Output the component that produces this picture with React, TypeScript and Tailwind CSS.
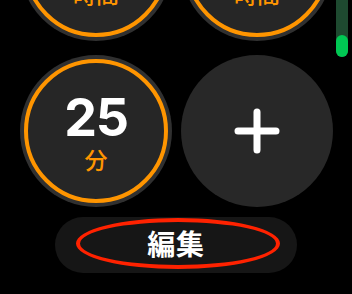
const timers = [
  { value: "1", unit: "時間" },
  { value: "2", unit: "時間" },
  { value: "25", unit: "分" },
];

function TimerCircle({ value, unit }: { value: string; unit: string }) {
  return (
    <div className="w-[152px] h-[152px] rounded-full bg-[#303030] p-[4px]">
      <div className="w-full h-full rounded-full border-[4px] border-[#ff9500] bg-[#262626] flex flex-col items-center justify-center">
        <div className="text-white font-bold text-[52px] leading-none tracking-tight mt-[2px]">{value}</div>
        <div className="text-[#ff9500] font-medium text-[23px] leading-none mt-[6px]">{unit}</div>
      </div>
    </div>
  );
}

export default function App() {
  return (
    <div
      className="relative w-[352px] h-[294px] bg-black overflow-hidden"
      style={{ fontFamily: 'Inter, "Noto Sans CJK JP", sans-serif' }}
    >
      <div className="-mt-[111px] flex flex-col items-center">
        <div className="grid grid-cols-2 gap-x-[9px] gap-y-[14px] ml-[1px]">
          {timers.map((t, i) => (
            <TimerCircle key={i} value={t.value} unit={t.unit} />
          ))}
          <div className="w-[152px] h-[152px] rounded-full bg-[#282828] flex items-center justify-center">
            <svg width="46" height="46" viewBox="0 0 46 46">
              <path d="M23 4 V42 M4 23 H42" stroke="white" strokeWidth="7" strokeLinecap="round" />
            </svg>
          </div>
        </div>
        <div className="relative mt-[10px] w-[242px] h-[56px] rounded-full bg-[#161616] flex items-center justify-center">
          <span className="text-white font-bold text-[28px] leading-none tracking-wide">編集</span>
          <div className="absolute left-[21px] top-[1px] w-[204px] h-[51px] rounded-[50%] border-[4px] border-[#ff2200]" />
        </div>
      </div>
      <div className="absolute right-[4px] top-0 w-[12px] h-[57px] rounded-b-full bg-[#1e4a30]">
        <div className="absolute bottom-0 left-0 w-[12px] h-[22px] rounded-full bg-[#00c853]" />
      </div>
    </div>
  );
}
